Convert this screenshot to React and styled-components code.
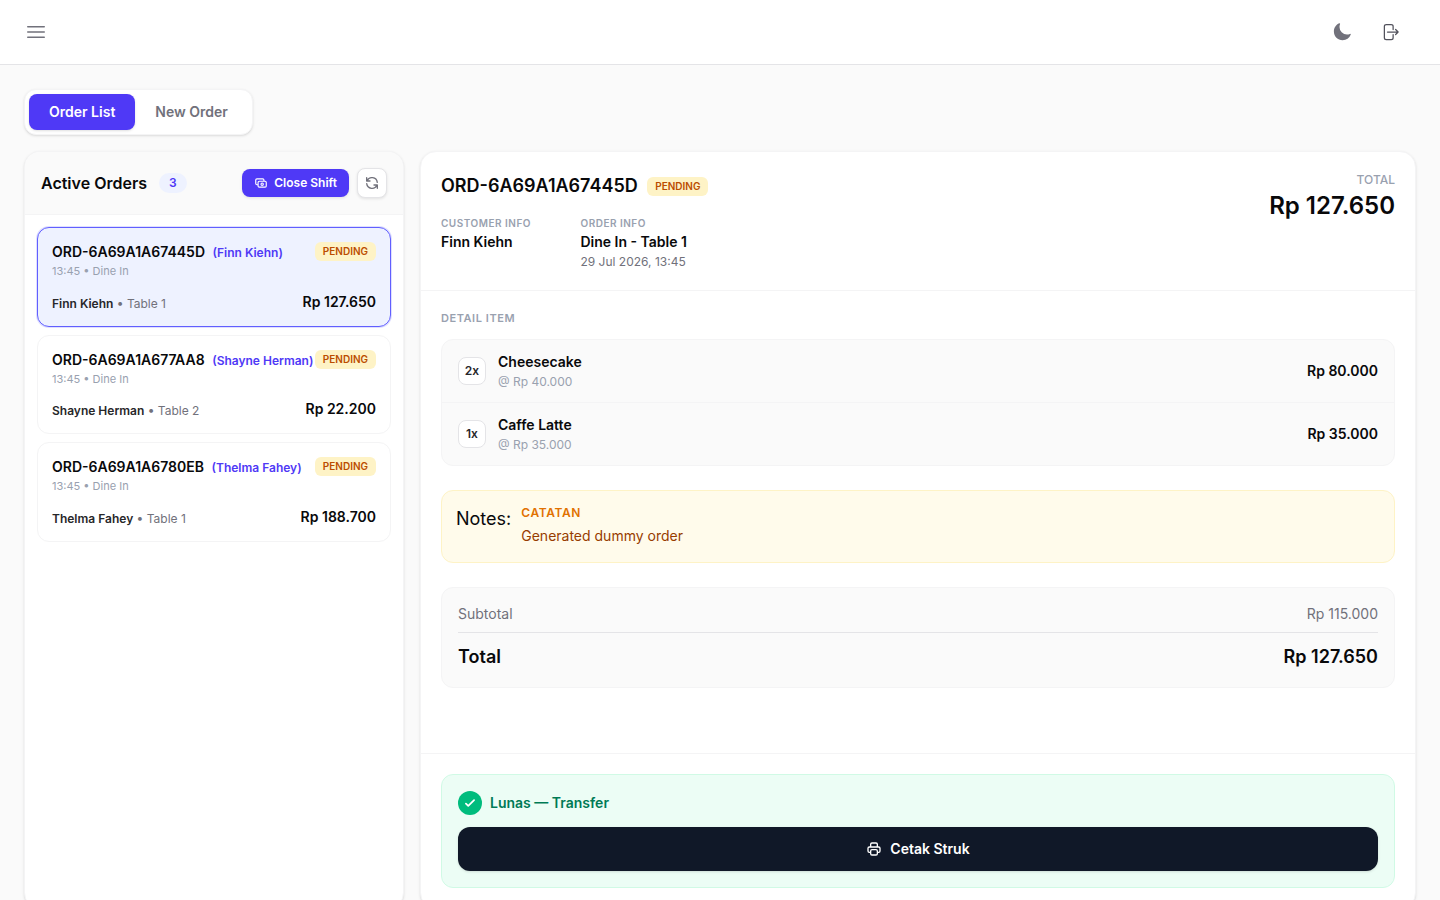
import React from "react";
import styled, { createGlobalStyle, css } from "styled-components";
import {
  HiOutlineBars3,
  HiOutlineArrowRightOnRectangle,
  HiMoon,
} from "react-icons/hi2";
import {
  HiOutlineCash,
  HiOutlineCheck,
  HiOutlinePrinter,
  HiOutlineRefresh,
} from "react-icons/hi";

const orders = [
  { id: "ORD-6A69A1A67445D", name: "Finn Kiehn", table: "Table 1", total: "Rp 127.650", active: true },
  { id: "ORD-6A69A1A677AA8", name: "Shayne Herman", table: "Table 2", total: "Rp 22.200" },
  { id: "ORD-6A69A1A6780EB", name: "Thelma Fahey", table: "Table 1", total: "Rp 188.700" },
];

const items = [
  { qty: "2x", name: "Cheesecake", price: "@ Rp 40.000", total: "Rp 80.000" },
  { qty: "1x", name: "Caffe Latte", price: "@ Rp 35.000", total: "Rp 35.000" },
];

export default function App() {
  return (
    <Page>
      <GlobalStyle />
      <Header>
        <HiOutlineBars3 size={24} />
        <HeaderActions>
          <HiMoon size={20} />
          <LogoutIcon size={20} />
        </HeaderActions>
      </Header>

      <Main>
        <Tabs>
          <Tab $active>Order List</Tab>
          <Tab>New Order</Tab>
        </Tabs>

        <Columns>
          <ListPanel>
            <ListHeader>
              <ListTitle>Active Orders</ListTitle>
              <Count>3</Count>
              <CloseShift>
                <HiOutlineCash size={14} />
                <span>Close Shift</span>
              </CloseShift>
              <Refresh>
                <HiOutlineRefresh size={16} />
              </Refresh>
            </ListHeader>
            <OrderList>
              {orders.map((order) => (
                <OrderCard key={order.id} $active={order.active}>
                  <OrderTop>
                    <div>
                      <OrderId>
                        {order.id}
                        <OrderName>({order.name})</OrderName>
                      </OrderId>
                      <OrderTime>13:45 • Dine In</OrderTime>
                    </div>
                    <Badge>PENDING</Badge>
                  </OrderTop>
                  <OrderBottom>
                    <OrderMeta>
                      <b>{order.name}</b> • {order.table}
                    </OrderMeta>
                    <OrderPrice>{order.total}</OrderPrice>
                  </OrderBottom>
                </OrderCard>
              ))}
            </OrderList>
          </ListPanel>

          <DetailPanel>
            <DetailHeader>
              <div>
                <TitleRow>
                  <DetailTitle>ORD-6A69A1A67445D</DetailTitle>
                  <Badge>PENDING</Badge>
                </TitleRow>
                <InfoGrid>
                  <div>
                    <Label>CUSTOMER INFO</Label>
                    <InfoValue>Finn Kiehn</InfoValue>
                  </div>
                  <div>
                    <Label>ORDER INFO</Label>
                    <InfoValue>Dine In - Table 1</InfoValue>
                    <InfoDate>29 Jul 2026, 13:45</InfoDate>
                  </div>
                </InfoGrid>
              </div>
              <TotalBox>
                <TotalLabel>TOTAL</TotalLabel>
                <TotalValue>Rp 127.650</TotalValue>
              </TotalBox>
            </DetailHeader>

            <DetailBody>
              <SectionTitle>DETAIL ITEM</SectionTitle>
              <ItemBox>
                {items.map((item) => (
                  <Item key={item.name}>
                    <Qty>{item.qty}</Qty>
                    <ItemInfo>
                      <ItemName>{item.name}</ItemName>
                      <ItemPrice>{item.price}</ItemPrice>
                    </ItemInfo>
                    <ItemTotal>{item.total}</ItemTotal>
                  </Item>
                ))}
              </ItemBox>

              <Notes>
                <NotesLabel>Notes:</NotesLabel>
                <div>
                  <NotesTitle>CATATAN</NotesTitle>
                  <NotesText>Generated dummy order</NotesText>
                </div>
              </Notes>

              <Summary>
                <SubtotalRow>
                  <span>Subtotal</span>
                  <span>Rp 115.000</span>
                </SubtotalRow>
                <GrandRow>
                  <span>Total</span>
                  <span>Rp 127.650</span>
                </GrandRow>
              </Summary>
            </DetailBody>

            <DetailFooter>
              <Paid>
                <PaidRow>
                  <Check>
                    <CheckIcon size={14} />
                  </Check>
                  Lunas — Transfer
                </PaidRow>
                <Print>
                  <HiOutlinePrinter size={16} />
                  <span>Cetak Struk</span>
                </Print>
              </Paid>
            </DetailFooter>
          </DetailPanel>
        </Columns>
      </Main>
    </Page>
  );
}

const GlobalStyle = createGlobalStyle`
  * {
    box-sizing: border-box;
  }
  body {
    margin: 0;
    background: #fafafa;
    font-family: Inter, sans-serif;
    color: #09090b;
  }
`;

const Page = styled.div`
  height: 100vh;
  overflow: hidden;
`;

const Header = styled.header`
  display: flex;
  align-items: center;
  justify-content: space-between;
  height: 65px;
  padding: 0 40px 0 24px;
  background: #fff;
  border-bottom: 1px solid #e4e4e7;
  color: #71717b;
`;

const HeaderActions = styled.div`
  display: flex;
  gap: 28px;
`;

const LogoutIcon = styled(HiOutlineArrowRightOnRectangle)`
  color: #52525c;
`;

const Main = styled.main`
  padding: 24px 24px 0;
`;

const Tabs = styled.div`
  display: flex;
  width: 229px;
  height: 46px;
  padding: 4px;
  border: 1px solid #f4f4f5;
  border-radius: 12px;
  background: #fff;
  box-shadow: 0 1px 3px rgba(0, 0, 0, 0.1), 0 1px 2px -1px rgba(0, 0, 0, 0.1);
`;

const Tab = styled.div`
  padding: 8px 20px;
  border-radius: 8px;
  font-size: 14px;
  line-height: 20px;
  font-weight: 580;
  color: #71717b;

  ${(p) =>
    p.$active &&
    css`
      background: #4f39f6;
      color: #fff;
      box-shadow: 0 1px 3px rgba(0, 0, 0, 0.1), 0 1px 2px -1px rgba(0, 0, 0, 0.1);
    `}
`;

const Columns = styled.div`
  display: flex;
  gap: 16px;
  margin-top: 16px;
`;

const Panel = styled.section`
  border: 1px solid #f4f4f5;
  border-radius: 16px;
  background: #fff;
  overflow: hidden;
  box-shadow: 0 1px 3px rgba(0, 0, 0, 0.1), 0 1px 2px -1px rgba(0, 0, 0, 0.1);
`;

const ListPanel = styled(Panel)`
  width: 380px;
  flex-shrink: 0;
`;

const ListHeader = styled.div`
  display: flex;
  align-items: center;
  height: 63px;
  padding: 0 16px;
  background: #fafafa;
  border-bottom: 1px solid #f4f4f5;
`;

const ListTitle = styled.h2`
  margin: 0;
  font-size: 16px;
  line-height: 24px;
  font-weight: 600;
`;

const Count = styled.span`
  margin-left: 12px;
  padding: 2px 10px;
  border-radius: 10px;
  background: #eef2ff;
  color: #4f39f6;
  font-size: 12px;
  line-height: 16px;
  font-weight: 600;
`;

const CloseShift = styled.div`
  display: flex;
  align-items: center;
  gap: 6px;
  height: 28px;
  margin-left: auto;
  padding: 0 12px;
  border-radius: 8px;
  background: #4f39f6;
  color: #fff;
  font-size: 12px;
  line-height: 16px;
  font-weight: 580;
  box-shadow: 0 1px 3px rgba(0, 0, 0, 0.1);
`;

const Refresh = styled.div`
  display: flex;
  align-items: center;
  justify-content: center;
  width: 30px;
  height: 30px;
  margin-left: 8px;
  border: 1px solid #e4e4e7;
  border-radius: 8px;
  background: #fff;
  color: #71717b;
  box-shadow: 0 1px 3px rgba(0, 0, 0, 0.1);
`;

const OrderList = styled.div`
  display: flex;
  flex-direction: column;
  gap: 8px;
  padding: 12px;
`;

const OrderCard = styled.article`
  height: 99.5px;
  padding: 14px;
  border: 1px solid ${(p) => (p.$active ? "#615fff" : "#f4f4f5")};
  border-radius: 12px;
  background: ${(p) => (p.$active ? "#eef2ff" : "#fff")};
  box-shadow: ${(p) => (p.$active ? "0 0 0 1px rgba(97, 95, 255, 0.2)" : "none")};
`;

const OrderTop = styled.div`
  display: flex;
  justify-content: space-between;
  align-items: flex-start;
  white-space: nowrap;
`;

const OrderId = styled.div`
  font-size: 14px;
  line-height: 20px;
  font-weight: 600;
`;

const OrderName = styled.span`
  margin-left: 7.5px;
  font-size: 12px;
  font-weight: 580;
  color: #4f39f6;
`;

const OrderTime = styled.div`
  font-size: 11px;
  line-height: 16.5px;
  color: #99a1af;
`;

const Badge = styled.span`
  padding: 2px 8px;
  border-radius: 6px;
  background: #fef3c6;
  color: #bb4d00;
  font-size: 10px;
  line-height: 15px;
  font-weight: 580;
`;

const OrderBottom = styled.div`
  display: flex;
  justify-content: space-between;
  align-items: flex-end;
  margin-top: 12px;
`;

const OrderMeta = styled.div`
  font-size: 12px;
  line-height: 16px;
  color: #71717b;

  b {
    font-weight: 580;
    color: #27272a;
  }
`;

const OrderPrice = styled.div`
  font-size: 14px;
  line-height: 20px;
  font-weight: 600;
`;

const DetailPanel = styled(Panel)`
  flex: 1;
`;

const DetailHeader = styled.div`
  display: flex;
  justify-content: space-between;
  height: 139px;
  padding: 20px;
  border-bottom: 1px solid #f4f4f5;
`;

const TitleRow = styled.div`
  display: flex;
  align-items: center;
  gap: 9.5px;
`;

const DetailTitle = styled.h1`
  margin: 0;
  font-size: 18px;
  line-height: 28px;
  font-weight: 600;
`;

const InfoGrid = styled.div`
  display: flex;
  gap: 49.5px;
  margin-top: 16px;
`;

const Label = styled.div`
  font-size: 10px;
  line-height: 15px;
  font-weight: 580;
  letter-spacing: 0.5px;
  color: #99a1af;
`;

const InfoValue = styled.div`
  margin-top: 1px;
  font-size: 14px;
  line-height: 20px;
  font-weight: 580;
`;

const InfoDate = styled.div`
  margin-top: 2px;
  font-size: 12px;
  line-height: 16px;
  color: #71717b;
`;

const TotalBox = styled.div`
  text-align: right;
`;

const TotalLabel = styled.div`
  font-size: 12px;
  line-height: 16px;
  font-weight: 500;
  color: #99a1af;
`;

const TotalValue = styled.div`
  margin-top: 2px;
  font-size: 24px;
  line-height: 32px;
  font-weight: 600;
`;

const DetailBody = styled.div`
  height: 463px;
  padding: 20px;
  border-bottom: 1px solid #f4f4f5;
`;

const SectionTitle = styled.div`
  font-size: 11px;
  line-height: 14px;
  font-weight: 580;
  letter-spacing: 0.55px;
  color: #99a1af;
`;

const ItemBox = styled.div`
  margin-top: 14px;
  border: 1px solid #f4f4f5;
  border-radius: 12px;
  background: #fafafa;
`;

const Item = styled.div`
  display: flex;
  align-items: center;
  height: 62px;
  padding: 0 16px;

  & + & {
    height: 63px;
    border-top: 1px solid #f4f4f5;
  }
`;

const Qty = styled.div`
  display: flex;
  align-items: center;
  justify-content: center;
  width: 28px;
  height: 28px;
  border: 1px solid #e4e4e7;
  border-radius: 8px;
  background: #fff;
  color: #27272a;
  font-size: 12px;
  line-height: 16px;
  font-weight: 580;
`;

const ItemInfo = styled.div`
  flex: 1;
  margin-left: 12px;
`;

const ItemName = styled.div`
  font-size: 14px;
  line-height: 20px;
  font-weight: 580;
`;

const ItemPrice = styled.div`
  margin-top: 2px;
  font-size: 12px;
  line-height: 16px;
  color: #99a1af;
`;

const ItemTotal = styled.div`
  font-size: 14px;
  line-height: 20px;
  font-weight: 600;
`;

const Notes = styled.div`
  display: flex;
  gap: 10px;
  height: 73px;
  margin-top: 24px;
  padding: 14px;
  border: 1px solid #fef3c6;
  border-radius: 12px;
  background: #fffbeb;
`;

const NotesLabel = styled.div`
  font-size: 18px;
  line-height: 28px;
`;

const NotesTitle = styled.div`
  font-size: 12px;
  line-height: 16px;
  font-weight: 580;
  letter-spacing: 0.6px;
  color: #e17100;
`;

const NotesText = styled.div`
  margin-top: 4px;
  font-size: 14px;
  line-height: 22px;
  color: #973c00;
`;

const Summary = styled.div`
  height: 101px;
  margin-top: 24px;
  padding: 16px;
  border: 1px solid #f4f4f5;
  border-radius: 12px;
  background: #fafafa;
`;

const SubtotalRow = styled.div`
  display: flex;
  justify-content: space-between;
  font-size: 14px;
  line-height: 20px;
  color: #71717b;
`;

const GrandRow = styled.div`
  display: flex;
  justify-content: space-between;
  margin-top: 8px;
  padding-top: 10px;
  border-top: 1px solid #e4e4e7;
  font-size: 18px;
  line-height: 28px;
  font-weight: 600;
`;

const DetailFooter = styled.div`
  padding: 20px;
`;

const Paid = styled.div`
  padding: 16px;
  border: 1px solid #d0fae5;
  border-radius: 12px;
  background: #ecfdf5;
`;

const PaidRow = styled.div`
  display: flex;
  align-items: center;
  gap: 8px;
  font-size: 14px;
  line-height: 20px;
  font-weight: 600;
  color: #007a55;
`;

const Check = styled.div`
  display: flex;
  align-items: center;
  justify-content: center;
  width: 24px;
  height: 24px;
  border-radius: 50%;
  background: #00bc7d;
  color: #fff;
`;

const CheckIcon = styled(HiOutlineCheck)`
  path {
    stroke-width: 3;
  }
`;

const Print = styled.div`
  display: flex;
  align-items: center;
  justify-content: center;
  gap: 8px;
  height: 44px;
  margin-top: 12px;
  border-radius: 12px;
  background: #101828;
  color: #fff;
  font-size: 14px;
  line-height: 20px;
  font-weight: 580;
  box-shadow: 0 1px 3px rgba(0, 0, 0, 0.1), 0 1px 2px -1px rgba(0, 0, 0, 0.1);
`;
